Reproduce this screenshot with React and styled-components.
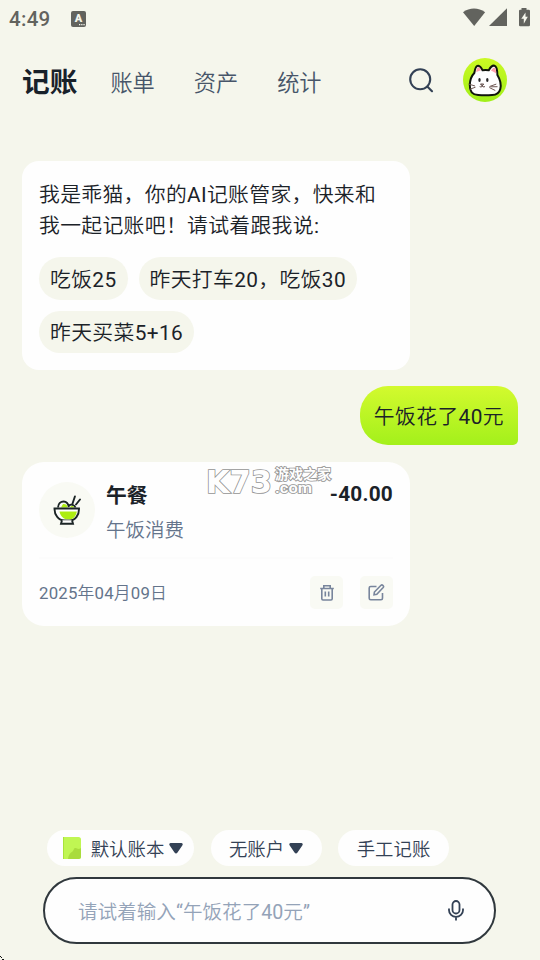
import React from "react";
import styled, { createGlobalStyle, css } from "styled-components";

const GlobalStyle = createGlobalStyle`
  * {
    box-sizing: border-box;
  }
  body {
    margin: 0;
    background-color: #f5f6ec;
    font-family: Roboto, "Noto Sans CJK SC DemiLight", "Noto Sans CJK SC Light", "Noto Sans CJK SC", sans-serif;
    color: #1b2228;
  }
`;

const Screen = styled.div`
  position: relative;
  width: 540px;
  height: 960px;
  display: flex;
  flex-direction: column;
  overflow: hidden;
  white-space: nowrap;
  background-color: #f5f6ec;
`;

const StatusBar = styled.div`
  height: 37px;
  padding: 0 9px;
  display: flex;
  align-items: center;
  color: #62635e;
  svg {
    display: block;
  }
`;
const Clock = styled.span`
  width: 62px;
  font-size: 20.5px;
  font-weight: 500;
  letter-spacing: 0.3px;
`;
const StatusIcons = styled.div`
  margin-left: auto;
  margin-top: -2px;
`;

const Header = styled.header`
  height: 86px;
  padding: 0 33px 0 22px;
  display: flex;
  align-items: center;
`;
const Nav = styled.nav`
  padding-top: 5px;
  display: flex;
  align-items: center;
  gap: 39px;
`;
const NavItem = styled.a`
  font-size: 22.2px;
  line-height: 40px;
  color: #475569;
  ${({ $active }) =>
    $active &&
    css`
      margin-right: -6px;
      font-family: Roboto, "Noto Sans CJK SC", sans-serif;
      font-size: 27.7px;
      font-weight: 700;
      color: #18212a;
    `}
`;
const Tools = styled.div`
  margin-left: auto;
  display: flex;
  align-items: center;
  gap: 29px;
  svg {
    display: block;
  }
`;

const Chat = styled.main`
  flex: 1;
  padding: 38px 22px 0;
  display: flex;
  flex-direction: column;
  align-items: flex-start;
`;
const Card = styled.section`
  width: 388px;
  height: ${({ $height }) => $height}px;
  padding: 0 17px;
  border-radius: ${({ $radius }) => $radius}px;
  background-color: #fefefe;
`;
const Intro = styled.p`
  margin: 0 0 15px;
  padding-top: 19px;
  font-size: 20.8px;
  line-height: 31px;
  letter-spacing: 0.35px;
`;
const Suggestions = styled.div`
  display: flex;
  flex-wrap: wrap;
  gap: 11px;
`;
const Suggestion = styled.button`
  height: 43px;
  padding: 0 11px 2px;
  border: 0;
  border-radius: 22px;
  background-color: #f5f6ec;
  font: inherit;
  font-size: 20.8px;
  letter-spacing: 0.38px;
  color: inherit;
  &:last-child {
    height: 42px;
    padding-bottom: 3px;
  }
`;
const Bubble = styled.div`
  height: 59px;
  margin: 16px 0 17px;
  padding: 0 14px 1px;
  align-self: flex-end;
  display: flex;
  align-items: center;
  border-radius: 28px 21px 5px 28px;
  background: linear-gradient(#d3fa2e, #a3f01b);
  font-size: 20.8px;
  letter-spacing: 0.4px;
`;

const Entry = styled.div`
  height: 97px;
  padding-top: 20px;
  display: flex;
  border-bottom: 2px solid #fcfcfc;
`;
const Category = styled.div`
  width: 56px;
  height: 56px;
  margin-right: 11px;
  padding-right: 1px;
  display: flex;
  align-items: center;
  justify-content: center;
  border-radius: 50%;
  background-color: #f9faf4;
`;
const EntryText = styled.div`
  flex: 1;
  padding-top: 1px;
`;
const EntryTitle = styled.div`
  font-family: Roboto, "Noto Sans CJK SC", sans-serif;
  font-size: 20.8px;
  font-weight: 700;
  line-height: 26px;
`;
const EntryNote = styled.div`
  margin-top: 8px;
  font-size: 19.5px;
  line-height: 28px;
  color: #64748b;
`;
const Amount = styled.div`
  font-size: 20.8px;
  font-weight: 700;
  line-height: 24px;
  letter-spacing: 0.2px;
`;
const EntryFooter = styled.div`
  height: 67px;
  display: flex;
  align-items: center;
  gap: 17px;
`;
const EntryDate = styled.span`
  flex: 1;
  padding-bottom: 2px;
  font-size: 16.8px;
  letter-spacing: 0.2px;
  color: #64748b;
`;
const IconButton = styled.button`
  width: 33px;
  height: 33px;
  padding: 0;
  display: flex;
  align-items: center;
  justify-content: center;
  border: 0;
  border-radius: 5px;
  background-color: #f9faf4;
  color: #78859c;
`;

const Footer = styled.footer`
  height: 130px;
  padding: 0 44px;
`;
const Options = styled.div`
  padding-left: 3px;
  display: flex;
  gap: 16.5px;
`;
const Option = styled.button`
  width: ${({ $width }) => $width}px;
  height: 36px;
  padding: 0;
  display: flex;
  align-items: center;
  justify-content: center;
  border: 0;
  border-radius: 18px;
  background-color: #fefefe;
  font: inherit;
  font-size: 18.4px;
  color: #334155;
`;
const InputBox = styled.div`
  height: 67px;
  margin: 11px 0 0 -1px;
  padding: 0 30px 0 33px;
  display: flex;
  align-items: center;
  justify-content: space-between;
  border: 2px solid #30383d;
  border-radius: 34px;
  background-color: #fefefe;
`;
const Placeholder = styled.span`
  padding-bottom: 1px;
  font-size: 19.6px;
  color: #94a3b8;
`;

const Watermark = styled.svg`
  position: absolute;
  left: 204px;
  top: 460px;
  paint-order: stroke;
`;
const Corner = styled.svg`
  position: absolute;
  left: 0;
  bottom: 0;
`;

const KeyboardIcon = () => (
  <svg width="15" height="16" viewBox="0 0 15 16">
    <rect width="15" height="16" rx="2" fill="currentColor" />
    <text x="7.4" y="11.4" textAnchor="middle" fontSize="11" fontWeight="900" fill="#f5f6ec">
      A
    </text>
    <path d="M8 13h1.3v1.3H8zM10.2 13h1.3v1.3h-1.3zM12.4 13h1.3v1.3h-1.3z" fill="#f5f6ec" />
  </svg>
);

const SignalIcons = () => (
  <svg width="68" height="20" viewBox="0 0 68 20" fill="currentColor">
    <path d="M0 4.3C6.5-.7 15.500-.7 22.100 4.300L11.200 18z" />
    <path d="M44 .2V18H26z" />
    <path
      fillRule="evenodd"
      d="M58.500 0h5v1.800h2.200q1.300 0 1.300 1.300v13.800q0 1.300-1.300 1.300h-8.400q-1.300 0-1.300-1.300V3.100q0-1.300 1.300-1.300h1.200zM62.500 4.500l-4.200 6.300h2.500v5l4-7h-2.300z"
    />
  </svg>
);

const SearchIcon = () => (
  <svg width="26" height="26" viewBox="0 0 26 26" fill="none" stroke="#334155" strokeWidth="2.100">
    <circle cx="12.200" cy="12.300" r="10" />
    <path d="M19.300 19.500l4.700 4.700" strokeLinecap="round" />
  </svg>
);

const CatAvatar = () => (
  <svg width="44" height="44" viewBox="0 0 44 44">
    <defs>
      <linearGradient id="avatar" x2="0" y2="1">
        <stop stopColor="#cbf923" />
        <stop offset="1" stopColor="#a0ef18" />
      </linearGradient>
    </defs>
    <circle cx="22" cy="22" r="22" fill="url(#avatar)" />
    <path
      d="M11.300 15C12 10.500 13.300 7.500 15.200 7.700c1.900.2 3.300 2.300 4.300 4.500 2-.4 4.200-.4 6.300 0 1.300-2.400 3.500-5 5.700-4.500 2.300.5 2.800 5.500 2.900 9.300 2.800 4.600 4 9.500 2.900 14-1 3.900-4.100 5.900-8.100 6.100-4.400.3-9.800.3-14 0-5.800-.4-8.700-4.400-8.400-10.200.2-4.800 1.400-8.700 4.500-11.900z"
      fill="#fefefe"
      stroke="#10150c"
      strokeWidth="2"
    />
    <path d="M13.200 14c.3-2.300.9-4.400 1.900-4.700 1.200-.3 2.200 1.600 2.900 3zM28 12.700c1-1.700 2.300-3.300 3.500-3 1.500.5 1.600 3.600 1.700 6-1.300-1.300-3.300-2.400-5.200-3z" fill="#ff9eaa" />
    <ellipse cx="16.500" cy="22" rx="1.200" ry="1.900" fill="#252525" />
    <ellipse cx="24.300" cy="22" rx="1.200" ry="1.900" fill="#252525" />
    <path d="M17.500 26l3.200.1-1.600 1.600zM19.200 27.500c0 1.500-1.400 1.600-2.500 1.100m2.500-1.100c0 1.500 1.500 1.600 2.700 1.100" fill="none" stroke="#4f3835" />
    <path d="M5.500 26l6.500 2M6 31.500l6.500-2.300M26.500 28.500l6.800-2.400M26.300 29.500l6 3M27.500 28.800l7-.1" fill="none" stroke="#6d5652" />
  </svg>
);

const BowlIcon = () => (
  <svg width="28" height="30" viewBox="0 0 28 30" fill="none" stroke="#1c2526" strokeWidth="1.900">
    <path d="M5 12.500c.2-4 2.800-6 5.600-6s4.700 2.300 5.200 5.700M16 10.500c2-1.700 5.500-.7 6.500 2" />
    <path d="M10 9c2.500-.5 4.500 1 4.700 3.500H8zM18 11c2.500 0 3.200.700 3.500 1.500h-4.500z" fill="#aded12" stroke="none" />
    <path d="M1.500 13.500h24.500c.2 6.500-3.600 12-9.500 12h-5C5.600 25.500 1.300 20 1.500 13.500z" fill="#fefefe" />
    <path d="M6.500 16.500H23.800c-.5 4-3.500 7.800-7 7.800h-2.500C10.500 24.300 7.200 20.500 6.500 16.500z" fill="#aded12" stroke="none" />
    <path d="M9 25.200l-1 3.500h12l-1-3.500" fill="#fefefe" />
    <path d="M19.300 9.300L21.900 1.500M23 9.500l4-5" strokeLinecap="round" />
  </svg>
);

const TrashIcon = () => (
  <svg width="16" height="18" viewBox="0 0 16 18" fill="none" stroke="currentColor" strokeWidth="1.600">
    <path d="M1.200 4.500h13.600M4.800 4.300V1.700h6.400v2.600M2.800 4.500v10.300q0 1.200 1.200 1.200h8q1.200 0 1.200-1.200V4.500M6.300 7.500v5M9.700 7.500v5" />
  </svg>
);

const EditIcon = () => (
  <svg width="17" height="17" viewBox="0 0 17 17" fill="none" stroke="currentColor" strokeWidth="1.600">
    <path d="M8.500 2.500H2.700q-1.500 0-1.500 1.500v10.200q0 1.500 1.500 1.500H13q1.500 0 1.500-1.500V9" />
    <path d="M6 10.800l.4-2.800L13 1.300q.9-.8 1.800 0l.4.400q.8.900 0 1.800L8.800 10.300z" />
  </svg>
);

const BookIcon = styled.svg`
  margin: 0 10px 0 5px;
`;
const CaretIcon = styled.svg`
  margin: 1px 0 0 5px;
`;
const Caret = () => (
  <CaretIcon width="14" height="11" viewBox="0 0 14 11">
    <path d="M1.500 0h11q2 .8.800 2.500L8.500 9.500q-1.500 1.800-3 0L.7 2.500Q-.5.800 1.500 0z" fill="#334155" />
  </CaretIcon>
);

const MicIcon = () => (
  <svg width="16" height="21" viewBox="0 0 16 21" fill="none" stroke="#334155" strokeWidth="1.800">
    <rect x="4.500" y="1" width="7" height="12.500" rx="3.500" />
    <path d="M1 8.500v1.700a7 6.700 0 0 0 14 0V8.500M8 17v3.500" />
  </svg>
);

function App() {
  return (
    <Screen>
      <GlobalStyle />
      <StatusBar>
        <Clock>4:49</Clock>
        <KeyboardIcon />
        <StatusIcons>
          <SignalIcons />
        </StatusIcons>
      </StatusBar>
      <Header>
        <Nav>
          {["记账", "账单", "资产", "统计"].map((el, index) => (
            <NavItem key={el} $active={index === 0}>
              {el}
            </NavItem>
          ))}
        </Nav>
        <Tools>
          <SearchIcon />
          <CatAvatar />
        </Tools>
      </Header>
      <Chat>
        <Card $height={209} $radius={17}>
          <Intro>
            我是乖猫，你的AI记账管家，快来和
            <br />
            我一起记账吧！请试着跟我说:
          </Intro>
          <Suggestions>
            {["吃饭25", "昨天打车20，吃饭30", "昨天买菜5+16"].map((el) => (
              <Suggestion key={el}>{el}</Suggestion>
            ))}
          </Suggestions>
        </Card>
        <Bubble>午饭花了40元</Bubble>
        <Card $height={164} $radius={22}>
          <Entry>
            <Category>
              <BowlIcon />
            </Category>
            <EntryText>
              <EntryTitle>午餐</EntryTitle>
              <EntryNote>午饭消费</EntryNote>
            </EntryText>
            <Amount>-40.00</Amount>
          </Entry>
          <EntryFooter>
            <EntryDate>2025年04月09日</EntryDate>
            <IconButton>
              <TrashIcon />
            </IconButton>
            <IconButton>
              <EditIcon />
            </IconButton>
          </EntryFooter>
        </Card>
      </Chat>
      <Footer>
        <Options>
          <Option $width={147}>
            <BookIcon width="18" height="22" viewBox="0 0 18 22">
              <path d="M0 0h15.500Q18 0 18 2.500v17q0 2.500-2.500 2.500H0z" fill="#c0f653" />
              <path d="M5 22c.5-4 2-6 4.500-7.500 1.500-1 .8-3.500 3-3.500 1.800 0 2.500 2 5.500 0v8.500q0 2.500-2.500 2.500z" fill="#a9dc3d" />
              <path d="M0 0h1v22H0z" fill="#a9e33b" />
            </BookIcon>
            默认账本
            <Caret />
          </Option>
          <Option $width={111}>
            无账户
            <Caret />
          </Option>
          <Option $width={111}>手工记账</Option>
        </Options>
        <InputBox>
          <Placeholder>请试着输入“午饭花了40元”</Placeholder>
          <MicIcon />
        </InputBox>
      </Footer>
      <Watermark
        width="130"
        height="40"
        viewBox="0 0 130 40"
        fontFamily="Roboto, 'Noto Sans CJK SC', sans-serif"
        fontWeight="700"
        fill="#fefefe"
        stroke="#949494"
        strokeWidth="1.700"
      >
        <text x="2" y="32.500" fontFamily="DejaVu Sans" fontSize="32" textLength="66" lengthAdjust="spacingAndGlyphs">
          K73
        </text>
        <text x="71" y="19" fontSize="14" textLength="56" lengthAdjust="spacingAndGlyphs">
          游戏之家
        </text>
        <text x="71" y="32.500" fontSize="15" textLength="37" lengthAdjust="spacingAndGlyphs">
          .com
        </text>
      </Watermark>
      <Corner width="4" height="4" viewBox="0 0 4 4">
        <path d="M0 0h1v1H0zM1 1h1v1H1zM2 3h2v1H2z" fill="#111" />
      </Corner>
    </Screen>
  );
}

export default App;
